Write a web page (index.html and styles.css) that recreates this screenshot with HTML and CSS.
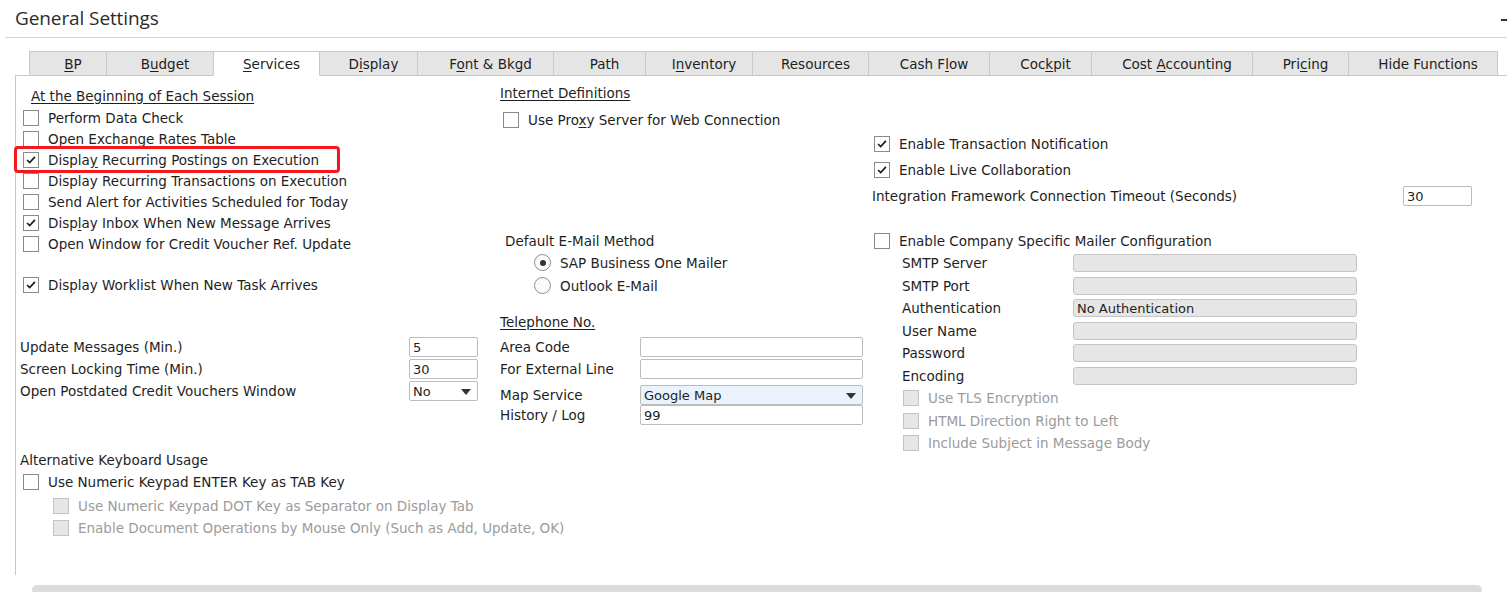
FILE: index.html
```html
<!DOCTYPE html>
<html lang="en">
<head>
<meta charset="utf-8">
<title>General Settings</title>
<link rel="stylesheet" href="styles.css">
</head>
<body>
<div class="window">
  <div class="titlebar">
    <h1 class="title">General Settings</h1>
    <span class="dash"></span>
  </div>

  <div class="tabbar">
    <div class="tab"><span><u>B</u>P</span></div>
    <div class="tab"><span>B<u>u</u>dget</span></div>
    <div class="tab active"><span><u>S</u>ervices</span></div>
    <div class="tab"><span>D<u>i</u>splay</span></div>
    <div class="tab"><span>F<u>o</u>nt &amp; Bkgd</span></div>
    <div class="tab"><span>Path</span></div>
    <div class="tab"><span>I<u>n</u>ventory</span></div>
    <div class="tab"><span>Resources</span></div>
    <div class="tab"><span>Cash F<u>l</u>ow</span></div>
    <div class="tab"><span>Coc<u>k</u>pit</span></div>
    <div class="tab"><span>Cost <u>A</u>ccounting</span></div>
    <div class="tab"><span>Pri<u>c</u>ing</span></div>
    <div class="tab"><span>Hide Functions</span></div>
  </div>

  <div class="panel">
    <!-- Column 1 -->
    <div class="col col1">
      <div class="head head-first"><span class="ul">At the Beginning of Each Session</span></div>
      <div class="chk-row"><span class="cb"></span><span>Perform Data Check</span></div>
      <div class="chk-row"><span class="cb"></span><span>Open Exchange Rates Table</span></div>
      <div class="chk-row"><span class="cb"><svg viewBox="0 0 16 16"><polyline points="3.5,8 6.5,11 12.5,4.5"/></svg></span><span>Displa<u>y</u> Recurring Postings on Execution</span></div>
      <div class="chk-row"><span class="cb"></span><span>Display Recurring Transactions on Execution</span></div>
      <div class="chk-row"><span class="cb"></span><span>Send Alert for Activities Scheduled for Today</span></div>
      <div class="chk-row"><span class="cb"><svg viewBox="0 0 16 16"><polyline points="3.5,8 6.5,11 12.5,4.5"/></svg></span><span>Disp<u>l</u>ay Inbox When New Message Arrives</span></div>
      <div class="chk-row"><span class="cb"></span><span>Open Window for Credit Voucher Ref. Update</span></div>
      <div class="chk-row worklist"><span class="cb"><svg viewBox="0 0 16 16"><polyline points="3.5,8 6.5,11 12.5,4.5"/></svg></span><span>Display Worklist When New Task Arrives</span></div>

      <div class="field f1 first-field">
        <span class="lbl">Update Messages (Min.)</span>
        <span class="inp small">5</span>
      </div>
      <div class="field f1">
        <span class="lbl">Screen Locking Time (Min.)</span>
        <span class="inp small">30</span>
      </div>
      <div class="field f1">
        <span class="lbl">Open Postdated Credit Vouchers Window</span>
        <span class="inp small sel">No<span class="arrow"></span></span>
      </div>

      <div class="plain-head">Alternative Keyboard Usage</div>
      <div class="chk-row tall"><span class="cb"></span><span>Use Numeric Keypad ENTER Key as TAB Key</span></div>
      <div class="chk-row tall sub first-sub disabled"><span class="cb"></span><span>Use Numeric Keypad DOT Key as Separator on Display Tab</span></div>
      <div class="chk-row tall sub disabled"><span class="cb"></span><span>Enable Document Operations by Mouse Only (Such as Add, Update, OK)</span></div>
    </div>

    <!-- Column 2 -->
    <div class="col col2">
      <div class="head"><span class="ul">Internet Definitions</span></div>
      <div class="chk-row proxy"><span class="cb"></span><span>Use Pro<u>x</u>y Server for Web Connection</span></div>

      <div class="mail-head">Default E-Mail Method</div>
      <div class="radio-row"><span class="rb on"></span><span>SAP Business One Mailer</span></div>
      <div class="radio-row"><span class="rb"></span><span>Outlook E-Mail</span></div>

      <div class="head tel-head"><span class="ul">Telephone No.</span></div>
      <div class="field f2 area">
        <span class="lbl">Area Code</span>
        <span class="inp wide"></span>
      </div>
      <div class="field f2">
        <span class="lbl">For External Line</span>
        <span class="inp wide"></span>
      </div>
      <div class="field f2 short map">
        <span class="lbl">Map Service</span>
        <span class="inp wide sel blue">Google Map<span class="arrow"></span></span>
      </div>
      <div class="field f2 short">
        <span class="lbl">History / Log</span>
        <span class="inp wide">99</span>
      </div>
    </div>

    <!-- Column 3 -->
    <div class="col col3">
      <div class="chk-row r26"><span class="cb"><svg viewBox="0 0 16 16"><polyline points="3.5,8 6.5,11 12.5,4.5"/></svg></span><span>Enable Transaction Notification</span></div>
      <div class="chk-row r26"><span class="cb"><svg viewBox="0 0 16 16"><polyline points="3.5,8 6.5,11 12.5,4.5"/></svg></span><span>Enable Live Collaboration</span></div>
      <div class="field f3">
        <span class="lbl">Integration Framework Connection Timeout (Seconds)</span>
        <span class="inp small">30</span>
      </div>

      <div class="chk-row company"><span class="cb"></span><span>Enable Company Specific Mailer Configuration</span></div>
      <div class="field smtp"><span class="lbl">SMTP Server</span><span class="inp grey"></span></div>
      <div class="field smtp"><span class="lbl">SMTP Port</span><span class="inp grey"></span></div>
      <div class="field smtp"><span class="lbl">Authentication</span><span class="inp grey">No Authentication</span></div>
      <div class="field smtp"><span class="lbl">User Name</span><span class="inp grey"></span></div>
      <div class="field smtp"><span class="lbl">Password</span><span class="inp grey"></span></div>
      <div class="field smtp"><span class="lbl">Encoding</span><span class="inp grey"></span></div>
      <div class="chk-row smtp-chk disabled"><span class="cb"></span><span>Use TLS Encryption</span></div>
      <div class="chk-row smtp-chk disabled"><span class="cb"></span><span>HTML Direction Right to Left</span></div>
      <div class="chk-row smtp-chk disabled"><span class="cb"></span><span>Include Subject in Message Body</span></div>
    </div>

    <div class="highlight"></div>
  </div>

  <div class="scrollbar"></div>
</div>
</body>
</html>
```

FILE: styles.css
```css
* { box-sizing: border-box; }

html, body {
  margin: 0;
  padding: 0;
  background: #ffffff;
}

body {
  font-family: "DejaVu Sans", "Liberation Sans", sans-serif;
  font-size: 13.5px;
  color: #1e1e1e;
  overflow: hidden;
}

u { text-decoration: underline; text-underline-offset: 2px; }

.window {
  width: 1507px;
  height: 592px;
  overflow: hidden;
}

/* Title bar */
.titlebar {
  margin-left: 5px;
  height: 38px;
  border-bottom: 1px solid #d4d4d4;
  display: flex;
  align-items: center;
  padding-left: 10px;
}

.title {
  margin: 0;
  font-family: "Open Sans", "Noto Sans", sans-serif;
  font-weight: 400;
  font-size: 19px;
  color: #2b2b2b;
  line-height: 37px;
  letter-spacing: -0.1px;
}

.dash {
  margin-left: auto;
  width: 6px;
  height: 2px;
  background: #333;
  margin-top: 2px;
}

/* Tabs */
.tabbar {
  margin: 13px 0 0 15px;
  padding-left: 14px;
  display: grid;
  grid-template-columns: 78px 107px 106px 98px 136px 92px 107px 116px 121px 102px 161px 96px 149px;
  justify-content: start;
  border-bottom: 1px solid #c9c9c9;
}

.tab {
  height: 25px;
  margin-bottom: -1px;
  margin-left: -1px;
  padding-left: 10px;
  border: 1px solid #c9c9c9;
  background: #e5e5e5;
  display: flex;
  align-items: center;
  justify-content: center;
  white-space: nowrap;
  color: #1e1e1e;
}

.tab:first-child { margin-left: 0; }

.tab.active {
  background: #ffffff;
  border-bottom-color: #ffffff;
  position: relative;
  z-index: 1;
}

/* Panel */
.panel {
  position: relative;
  margin-left: 15px;
  border-left: 1px solid #c9c9c9;
  height: 499px;
  display: flex;
}

.col { white-space: nowrap; }

.col1 { width: 484px; padding: 8px 0 0 4px; }
.col2 { width: 372px; padding-top: 6px; }
.col3 { flex: 1; padding-top: 55px; }

.head {
  height: 21px;
  display: flex;
  align-items: center;
}

.head-first { height: 23px; padding-left: 11px; }

.ul { text-decoration: underline; text-underline-offset: 2px; }

.chk-row {
  height: 21px;
  display: flex;
  align-items: center;
  padding-left: 3px;
}

.chk-row.tall { height: 22px; }
.chk-row.worklist { margin-top: 20px; }
.chk-row.sub { padding-left: 33px; }
.chk-row.first-sub { margin-top: 2px; }

.cb {
  width: 16px;
  height: 16px;
  flex: none;
  border: 1px solid #8a8a8a;
  background: #ffffff;
  margin-right: 9px;
  display: flex;
  align-items: center;
  justify-content: center;
}

.cb svg {
  width: 14px;
  height: 14px;
  fill: none;
  stroke: #1a1a1a;
  stroke-width: 1.9;
}

.disabled { color: #9b9b9b; }
.disabled .cb {
  background: #e6e6e6;
  border-color: #c3c3c3;
}

/* Fields */
.field {
  display: flex;
  align-items: center;
  height: 22px;
}

.lbl { flex: none; }

.inp {
  display: flex;
  align-items: center;
  height: 20px;
  border: 1px solid #bcbcbc;
  border-radius: 2px;
  background: #ffffff;
  padding-left: 3px;
  position: relative;
  font-size: 13px;
}

.inp.small { width: 69px; }
.inp.wide { width: 223px; }

.f1 .lbl { width: 389px; }
.f1.first-field { margin-top: 41px; }

.sel .arrow {
  position: absolute;
  right: 6px;
  top: 7px;
  width: 0;
  height: 0;
  border-left: 5px solid transparent;
  border-right: 5px solid transparent;
  border-top: 6px solid #333;
}

.inp.blue { background: #eaf2fc; }

.plain-head {
  margin-top: 47px;
  height: 22px;
  display: flex;
  align-items: center;
}

/* Column 2 */
.proxy { margin-top: 6px; }

.mail-head {
  margin-top: 100px;
  height: 21px;
  padding-left: 5px;
  display: flex;
  align-items: center;
}

.radio-row {
  height: 23px;
  padding-left: 34px;
  display: flex;
  align-items: center;
}

.rb {
  width: 17px;
  height: 17px;
  border: 1px solid #8c8c8c;
  border-radius: 50%;
  background: #fbfbfb;
  margin-right: 9px;
  display: flex;
  align-items: center;
  justify-content: center;
  flex: none;
}

.rb.on::after {
  content: "";
  width: 6px;
  height: 6px;
  border-radius: 50%;
  background: #333;
}

.tel-head { margin-top: 14px; }

.f2 .lbl { width: 140px; }
.f2.area { margin-top: 4px; }
.f2.short { height: 20px; }
.f2.map { margin-top: 5px; }

/* Column 3 */
.chk-row.r26 { height: 26px; padding-left: 2px; }

.f3 { height: 26px; }
.f3 .lbl { width: 531px; }

.chk-row.company { margin-top: 21px; height: 22px; padding-left: 2px; }

.smtp { height: 22.5px; padding-left: 30px; }
.smtp .lbl { width: 171px; }

.inp.grey {
  width: 284px;
  height: 18px;
  background: #e6e6e6;
  border-color: #c4c4c4;
  border-radius: 3px;
}

.chk-row.smtp-chk { height: 22.5px; padding-left: 31px; }

/* Highlight overlay */
.highlight {
  position: absolute;
  left: -2px;
  top: 70px;
  width: 326px;
  height: 27px;
  border: 3px solid #f5171a;
  border-radius: 4px;
  pointer-events: none;
}

/* Scrollbar */
.scrollbar {
  margin: 10px 0 0 32px;
  width: 1450px;
  height: 10px;
  background: #dcdcdc;
  border-radius: 5px;
}
```
